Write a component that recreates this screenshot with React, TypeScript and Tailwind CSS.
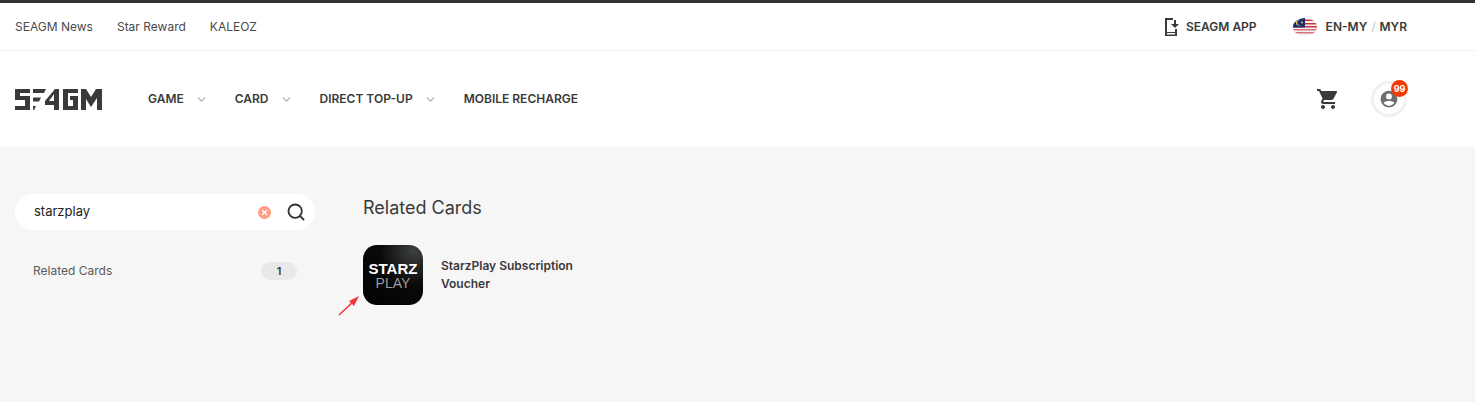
import { ChevronDown, Search } from "lucide-react";

function Logo() {
  return (
    <svg width="88" height="21" viewBox="0 0 88 21" fill="#3a3a3a">
      <path d="M0 0h15v4H5v3h10v14H0v-4h10v-6H0z" />
      <path d="M18 0h13l-2 4H18zM18 8.500h8l-2 4h-6zM18 17h3l-2 4h-1z" />
      <path d="M40 0h4v21h-5v-5h-9v-4l10-12zM39 5l-5 7h5z" />
      <path d="M48 0h15v4H53v13h5v-6h-3V7h8v14H48z" />
      <path d="M66 0h5l5 8 5-8h6v21h-5V9l-6 9-5-8v11h-5z" />
    </svg>
  );
}

function Flag() {
  return (
    <svg width="24" height="18" viewBox="0 0 24 18" className="rounded-[50%]">
      <rect width="24" height="18" fill="#f4f1f1" />
      <rect y="1.500" width="24" height="1.500" fill="#cc3344" />
      <rect y="5" width="24" height="1.500" fill="#cc3344" />
      <rect y="8" width="24" height="1.500" fill="#cc3344" />
      <rect y="11" width="24" height="1.500" fill="#d9707c" />
      <rect y="14" width="24" height="1.500" fill="#d9707c" />
      <rect width="12" height="9.500" fill="#1d2a6b" />
      <circle cx="6" cy="4.700" r="3" fill="#f2c94c" />
      <circle cx="7" cy="4.700" r="2.600" fill="#1d2a6b" />
      <circle cx="9" cy="4.500" r="1" fill="#f2c94c" />
    </svg>
  );
}

function NavItem({ label, arrow = true }: { label: string; arrow?: boolean }) {
  return (
    <div className="flex items-center">
      <span className="text-[12px] font-semibold text-[#3a3a3a]">{label}</span>
      {arrow && <ChevronDown className="ml-[11px] h-[13px] w-[13px] text-[#a8a8a8]" strokeWidth={2} />}
    </div>
  );
}

export default function App() {
  return (
    <div className="h-[402px] overflow-hidden bg-[#f6f6f6] font-['Inter',sans-serif] text-[#3a3a3a]">
      <div className="border-t-[3px] border-[#333333] bg-white">
        <div className="flex h-[48px] items-center justify-between border-b border-[#f0f0f0] pl-[15px] pr-[68px] text-[12px]">
          <div className="flex items-center gap-[24px] text-[#4a4a4a]">
            <span>SEAGM News</span>
            <span>Star Reward</span>
            <span>KALEOZ</span>
          </div>
          <div className="flex items-center text-[12px] font-semibold">
            <svg width="14" height="18" viewBox="0 0 14 18" fill="#3a3a3a" className="mr-[7px]">
              <path d="M0 0h8v2H2v12h8v-3h2v7H0z" />
              <rect x="2" y="15" width="8" height="1.500" fill="#fff" />
              <path d="M9 2h2v4h3l-4 4-4-4h3z" />
            </svg>
            <span>SEAGM APP</span>
            <span className="ml-[36px] mr-[9px]"><Flag /></span>
            <span>EN-MY</span>
            <span className="mx-[4px] font-normal text-[#c4c4c4]">/</span>
            <span>MYR</span>
          </div>
        </div>
        <div className="flex h-[96px] items-center justify-between pl-[15px] pr-[68px]">
          <div className="flex items-center">
            <Logo />
            <div className="ml-[45px] flex items-center gap-[27px]">
              <NavItem label="GAME" />
              <NavItem label="CARD" />
              <NavItem label="DIRECT TOP-UP" />
              <NavItem label="MOBILE RECHARGE" arrow={false} />
            </div>
          </div>
          <div className="flex items-center gap-[31px]">
            <svg width="24" height="24" viewBox="0 0 24 24" fill="#3a3a3a">
              <path d="M7 18c-1.100 0-1.990.9-1.990 2S5.900 22 7 22s2-.9 2-2-.9-2-2-2zM1 2v2h2l3.600 7.590-1.350 2.450c-.16.28-.25.61-.25.960 0 1.100.9 2 2 2h12v-2H7.420c-.14 0-.25-.11-.25-.25l.03-.12.9-1.630h7.450c.75 0 1.410-.41 1.750-1.030l3.580-6.490A1 1 0 0 0 20 4H5.210l-.94-2H1zm16 16c-1.100 0-1.990.9-1.990 2s.89 2 1.990 2 2-.9 2-2-.9-2-2-2z" />
            </svg>
            <div className="relative flex h-[36px] w-[36px] items-center justify-center rounded-full border-[3px] border-[#f1f1f1]">
              <svg width="20" height="20" viewBox="0 0 24 24" fill="#6f6f6f">
                <path d="M12 2C6.480 2 2 6.480 2 12s4.480 10 10 10 10-4.480 10-10S17.520 2 12 2zm0 3.500a3.500 3.500 0 1 1 0 7 3.500 3.500 0 0 1 0-7zM12 20c-2.700 0-5.100-1.300-6.500-3.400C6.500 15 9.500 14.300 12 14.300s5.500.7 6.500 2.300C17.100 18.700 14.700 20 12 20z" />
              </svg>
              <span className="absolute right-[-4px] top-[-4px] flex h-[17px] w-[17px] items-center justify-center rounded-full bg-[#f03c02] text-[9px] font-bold text-white">
                99
              </span>
            </div>
          </div>
        </div>
      </div>

      <div className="flex pl-[15px] pt-[47px]">
        <div className="w-[300px]">
          <div className="flex h-[36px] items-center rounded-[18px] bg-white pl-[19px] pr-[9px]">
            <span className="text-[13px] text-[#222222]">starzplay</span>
            <span className="ml-auto flex h-[13px] w-[13px] items-center justify-center rounded-full bg-[#ff9c84]">
              <svg width="7" height="7" viewBox="0 0 7 7" stroke="#fff" strokeWidth="1.200">
                <path d="M1 1l5 5M6 1L1 6" />
              </svg>
            </span>
            <Search className="ml-[15px] h-[20px] w-[20px] text-[#333333]" strokeWidth={2.200} />
          </div>
          <div className="mt-[32px] flex items-center justify-between pl-[18px] pr-[18px]">
            <span className="text-[12px] text-[#5a5a5a]">Related Cards</span>
            <span className="flex h-[18px] w-[36px] items-center justify-center rounded-[9px] bg-[#e9e9e9] text-[11px] font-semibold">1</span>
          </div>
        </div>
        <div className="ml-[48px]">
          <h2 className="text-[18px] leading-[28px] text-[#3a3a3a]">Related Cards</h2>
          <div className="mt-[23px] flex items-center">
            <div className="relative flex h-[60px] w-[60px] flex-col items-center justify-center rounded-[14px] bg-[radial-gradient(circle_at_85%_10%,#3c403e_0%,#0a0a0a_45%,#000000_100%)] font-['Liberation_Sans',sans-serif] leading-none text-white">
              <span className="text-[15px] font-bold leading-[15px]">STARZ</span>
              <span className="text-[14px] leading-[14px] text-[#9a9a9a]">PLAY</span>
              <svg width="24" height="22" viewBox="0 0 24 22" className="absolute bottom-[-11px] left-[-25px]">
                <path d="M1 21L16 7" stroke="#f5333f" strokeWidth="1.600" />
                <path d="M21 2L11 7l5 5z" fill="#f5333f" />
              </svg>
            </div>
            <div className="ml-[18px] w-[150px] text-[12px] font-semibold leading-[18px] text-[#3a3a3a]">
              StarzPlay Subscription Voucher
            </div>
          </div>
        </div>
      </div>
    </div>
  );
}
